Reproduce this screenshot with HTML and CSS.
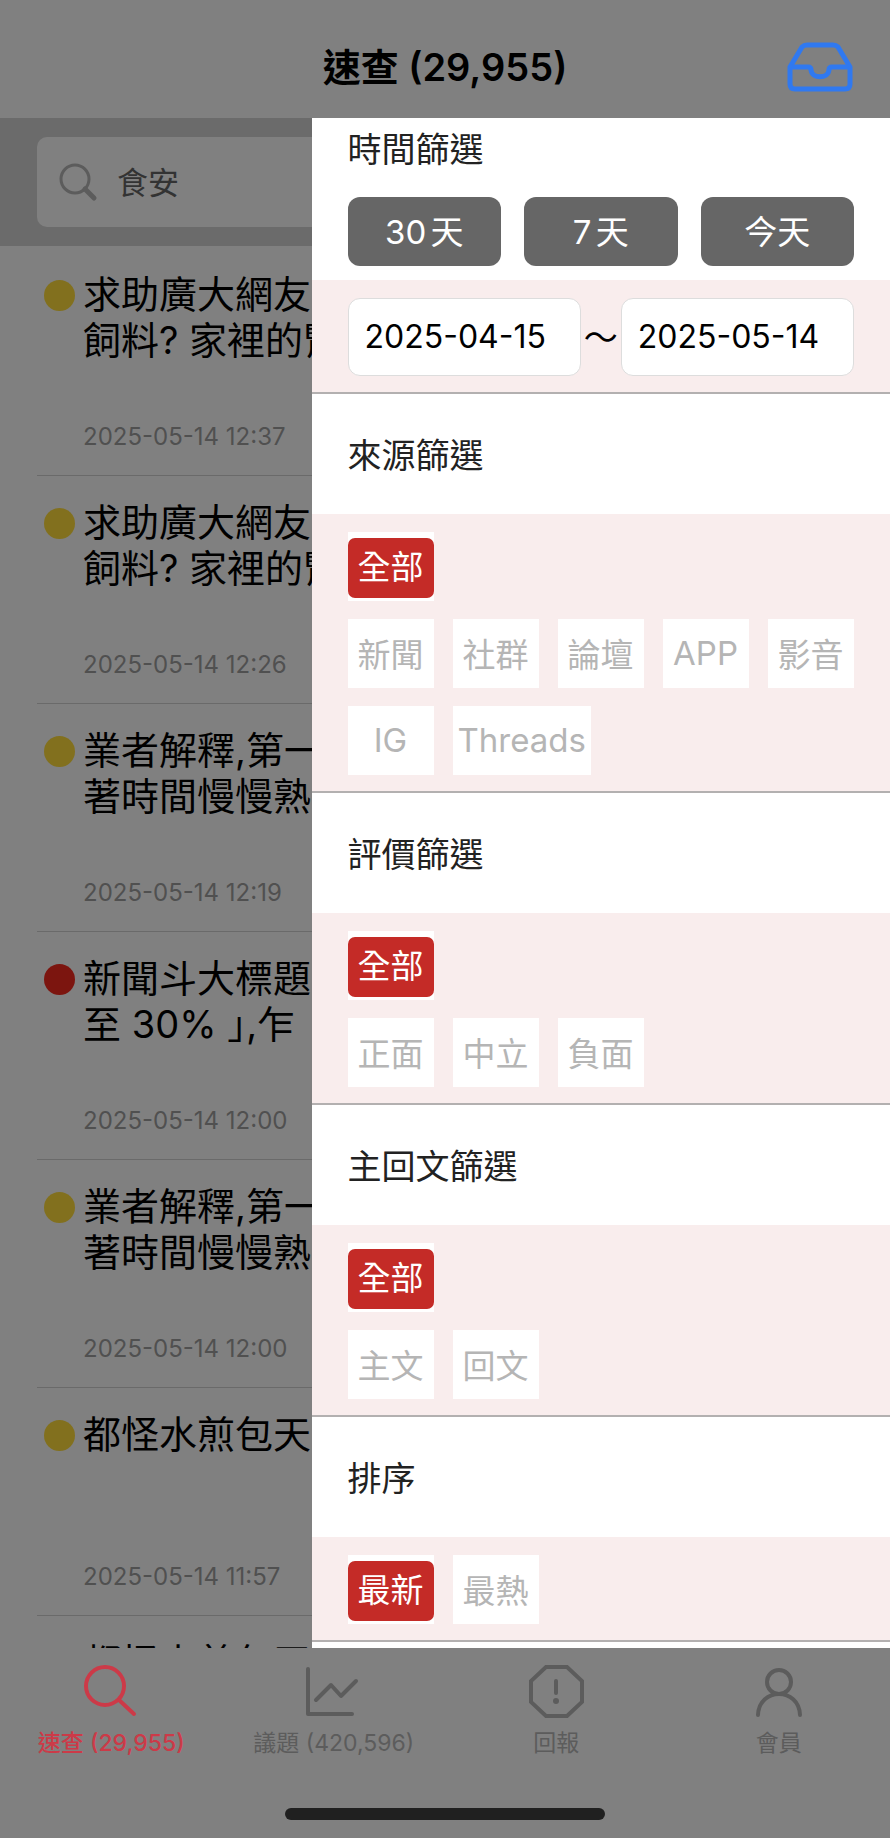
FILE: index.html
```html
<!DOCTYPE html>
<html lang="zh-Hant">
<head>
  <meta charset="UTF-8">
  <meta name="viewport" content="width=device-width, initial-scale=1">
  <title>速查</title>
  <link rel="stylesheet" href="styles.css">
</head>
<body>
  <header class="topbar">
    <h1>速查 (29,955)</h1>
    <button type="button" class="inbox-button" aria-label="收件匣">
      <svg width="68" height="52" viewBox="0 0 68 52" fill="none" stroke="currentColor" stroke-width="5" stroke-linejoin="round">
        <path d="M4 26 L16 6 Q18 4 21 4 H47 Q50 4 52 6 L64 26 V43 Q64 48 59 48 H9 Q4 48 4 43 Z"/>
        <path d="M4 26 H22 Q25 26 25 29 C26 38 42 38 43 29 Q43 26 46 26 H64"/>
      </svg>
    </button>
  </header>

  <main class="content">
    <form class="search-bar">
      <label class="search-box">
        <svg width="40" height="40" viewBox="0 0 40 40" fill="none" stroke="currentColor" stroke-linecap="round">
          <circle cx="17" cy="17" r="14" stroke-width="3"/>
          <path d="M27 27 L36 36" stroke-width="5"/>
        </svg>
        <input type="text" name="keyword" value="食安" aria-label="關鍵字">
      </label>
    </form>

    <ul class="news-list">
      <li class="news">
        <span class="dot"></span>
        <h2>求助廣大網友<br>飼料? 家裡的腎</h2>
        <time>2025-05-14 12:37</time>
      </li>
      <li class="news">
        <span class="dot"></span>
        <h2>求助廣大網友<br>飼料? 家裡的腎</h2>
        <time>2025-05-14 12:26</time>
      </li>
      <li class="news">
        <span class="dot"></span>
        <h2>業者解釋,第一<br>著時間慢慢熟</h2>
        <time>2025-05-14 12:19</time>
      </li>
      <li class="news">
        <span class="dot negative"></span>
        <h2>新聞斗大標題<br>至 30% 」,乍</h2>
        <time>2025-05-14 12:00</time>
      </li>
      <li class="news">
        <span class="dot"></span>
        <h2>業者解釋,第一<br>著時間慢慢熟</h2>
        <time>2025-05-14 12:00</time>
      </li>
      <li class="news">
        <span class="dot"></span>
        <h2>都怪水煎包天</h2>
        <time>2025-05-14 11:57</time>
      </li>
      <li class="news">
        <span></span>
        <h2>都怪水煎包天</h2>
      </li>
    </ul>

    <!-- 篩選側欄 -->
    <aside class="drawer">
      <section class="filter filter-time">
        <h2>時間篩選</h2>
        <div class="quick-days">
          <button type="button">30天</button>
          <button type="button">7天</button>
          <button type="button">今天</button>
        </div>
        <div class="date-range">
          <input type="text" name="from" value="2025-04-15" aria-label="開始日期">
          <span>～</span>
          <input type="text" name="to" value="2025-05-14" aria-label="結束日期">
        </div>
      </section>

      <section class="filter">
        <h2>來源篩選</h2>
        <div class="options">
          <div class="chips">
            <button type="button" class="chip selected"><span>全部</span></button>
          </div>
          <div class="chips">
            <button type="button" class="chip">新聞</button>
            <button type="button" class="chip">社群</button>
            <button type="button" class="chip">論壇</button>
            <button type="button" class="chip">APP</button>
            <button type="button" class="chip">影音</button>
            <button type="button" class="chip">IG</button>
            <button type="button" class="chip">Threads</button>
          </div>
        </div>
      </section>

      <section class="filter">
        <h2>評價篩選</h2>
        <div class="options">
          <div class="chips">
            <button type="button" class="chip selected"><span>全部</span></button>
          </div>
          <div class="chips">
            <button type="button" class="chip">正面</button>
            <button type="button" class="chip">中立</button>
            <button type="button" class="chip">負面</button>
          </div>
        </div>
      </section>

      <section class="filter">
        <h2>主回文篩選</h2>
        <div class="options">
          <div class="chips">
            <button type="button" class="chip selected"><span>全部</span></button>
          </div>
          <div class="chips">
            <button type="button" class="chip">主文</button>
            <button type="button" class="chip">回文</button>
          </div>
        </div>
      </section>

      <section class="filter">
        <h2>排序</h2>
        <div class="options">
          <div class="chips">
            <button type="button" class="chip selected"><span>最新</span></button>
            <button type="button" class="chip">最熱</button>
          </div>
        </div>
      </section>
    </aside>
  </main>

  <footer class="bottom">
    <nav class="tabs">
      <a href="#" class="tab active">
        <svg width="56" height="56" viewBox="0 0 56 56" fill="none" stroke="currentColor" stroke-width="4" stroke-linecap="round">
          <circle cx="22" cy="23" r="19"/>
          <path d="M36 37 L51 51"/>
        </svg>
        <span>速查 (29,955)</span>
      </a>
      <a href="#" class="tab">
        <svg width="56" height="56" viewBox="0 0 56 56" fill="none" stroke="currentColor" stroke-width="4" stroke-linecap="round" stroke-linejoin="round">
          <path d="M2 6 V51 H46"/>
          <path d="M10 37 L25 22 L35 33 L50 18"/>
        </svg>
        <span>議題 (420,596)</span>
      </a>
      <a href="#" class="tab">
        <svg width="56" height="56" viewBox="0 0 56 56" fill="none" stroke="currentColor" stroke-width="4" stroke-linecap="round">
          <path d="M18 4 H39 L54 18 V39 L39 53 H18 L3 39 V18 Z"/>
          <path d="M28 18 V30"/>
          <circle cx="28" cy="38" r="3" fill="currentColor" stroke="none"/>
        </svg>
        <span>回報</span>
      </a>
      <a href="#" class="tab">
        <svg width="56" height="56" viewBox="0 0 56 56" fill="none" stroke="currentColor" stroke-width="4" stroke-linecap="round">
          <circle cx="28" cy="19" r="12"/>
          <path d="M7 52 C8 24 48 24 49 52"/>
        </svg>
        <span>會員</span>
      </a>
    </nav>
    <div class="home-bar"></div>
  </footer>
</body>
</html>
```

FILE: styles.css
```css
* {
  box-sizing: border-box;
}
body {
  margin: 0;
  height: 100vh;
  display: flex;
  flex-direction: column;
  background-color: #808080;
  color: #000;
  font-family: Inter, "Noto Sans CJK TC", sans-serif;
}
h1, h2, ul {
  margin: 0;
  padding: 0;
  font-weight: normal;
}
button, input {
  font-family: inherit;
}
button {
  padding: 0;
  border: none;
  cursor: pointer;
}

/* Top bar */
.topbar {
  height: 118px;
  padding: 16px 36px 0;
  display: grid;
  grid-template-columns: 1fr auto 1fr;
  align-items: center;
}
.topbar h1 {
  grid-column: 2;
  font-size: 38px;
  font-weight: 600;
  line-height: 46px;
}
.inbox-button {
  justify-self: end;
  background: none;
  color: #3079f0;
}
.inbox-button svg {
  display: block;
}

/* Search */
.content {
  position: relative;
  flex: 1;
  min-height: 0;
  overflow: hidden;
}
.search-bar {
  padding: 19px 37px;
  background-color: #6b6b6b;
}
.search-box {
  display: flex;
  align-items: center;
  gap: 16px;
  height: 90px;
  padding: 0 21px;
  border-radius: 10px;
  background-color: #808080;
  color: #5c5c5c;
}
.search-box input {
  flex: 1;
  min-width: 0;
  padding: 0 0 4px 3px;
  border: none;
  background: none;
  color: #333;
  font-size: 31px;
}

/* News list */
.news-list {
  padding: 2px 37px 0;
  list-style: none;
}
.news {
  display: grid;
  grid-template-columns: 38px 1fr;
  grid-template-rows: 92px 1fr;
  column-gap: 8px;
  height: 228px;
  padding: 23px 0 24px;
  border-bottom: 1px solid #6a6a6a;
}
.dot {
  justify-self: end;
  width: 31px;
  height: 31px;
  margin-top: 9px;
  border-radius: 50%;
  background-color: #82701e;
}
.dot.negative {
  background-color: #7c150f;
}
.news h2 {
  font-size: 38px;
  line-height: 46px;
  white-space: nowrap;
  font-feature-settings: "halt";
  text-autospace: no-autospace;
}
.news time {
  grid-column: 2;
  align-self: end;
  color: #505050;
  font-size: 24px;
  line-height: 28px;
}

/* Filter drawer */
.drawer {
  position: absolute;
  top: 0;
  right: 0;
  bottom: 0;
  width: 65%;
  overflow: hidden;
  background-color: #fff;
}
.filter {
  border-bottom: 2px solid #b3b0b0;
}
.filter h2 {
  padding: 4px 36px 0;
  color: #222;
  font-size: 34px;
  line-height: 116px;
}
.filter-time h2 {
  padding-top: 8px;
  padding-bottom: 23px;
  line-height: 48px;
}
.quick-days {
  display: flex;
  gap: 23px;
  padding: 0 36px 14px;
}
.quick-days button {
  flex: 1;
  height: 69px;
  padding-bottom: 4px;
  border-radius: 12px;
  background-color: #666;
  color: #fff;
  font-size: 33px;
  text-autospace: normal;
}
.date-range,
.options {
  padding: 18px 36px 16px;
  background-color: #f9eded;
}
.date-range {
  display: flex;
  align-items: center;
}
.date-range input {
  flex: 1;
  min-width: 0;
  height: 78px;
  padding: 0 16px 2px;
  border: 1px solid #ddd;
  border-radius: 12px;
  background-color: #fff;
  color: #000;
  font-size: 32px;
}
.date-range span {
  width: 40px;
  padding-bottom: 4px;
  text-align: center;
  font-size: 34px;
}
.options {
  display: flex;
  flex-direction: column;
  gap: 18px;
}
.chips {
  display: flex;
  flex-wrap: wrap;
  gap: 18px 19px;
}
.chip {
  min-width: 86px;
  height: 69px;
  padding: 0 5px 2px;
  background-color: #fff;
  color: #b5b5b5;
  font-size: 33px;
}
.chip.selected {
  padding: 6px 0 3px;
  color: #fff;
}
.chip.selected span {
  display: block;
  padding-bottom: 2px;
  border-radius: 7px;
  background-color: #c42b27;
  line-height: 58px;
}

/* Bottom tabs */
.bottom {
  height: 190px;
  padding-bottom: 18px;
  display: flex;
  flex-direction: column;
  justify-content: space-between;
}
.tabs {
  display: flex;
  padding-top: 15px;
}
.tab {
  flex: 1;
  display: flex;
  flex-direction: column;
  align-items: center;
  gap: 10px;
  color: #5c5c5c;
  font-size: 23px;
  line-height: 28px;
  text-decoration: none;
}
.tab.active {
  color: #cc3a48;
  font-weight: 500;
}
.home-bar {
  align-self: center;
  width: 36%;
  height: 12px;
  border-radius: 6px;
  background-color: #202020;
}
```
